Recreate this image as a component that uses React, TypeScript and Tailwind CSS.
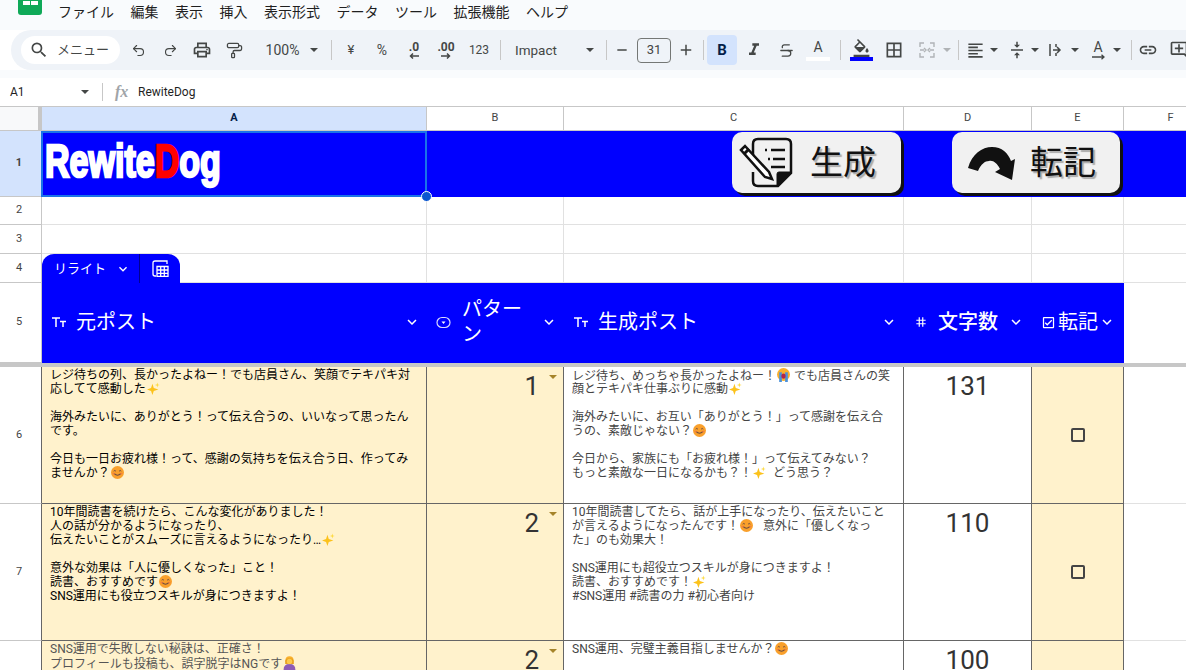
import React from "react";
import {
  MdOutlinePrint, MdSearch, MdRemove, MdAdd, MdFormatItalic,
  MdFormatColorFill, MdBorderAll, MdFormatAlignLeft, MdVerticalAlignCenter, MdLink, MdOutlineAddComment,
  MdExpandMore, MdOutlineCheckBox, MdTag,
} from "react-icons/md";
import { Undo2, Redo2, PaintRoller, Strikethrough } from "lucide-react";

const sans = "font-['Roboto','Noto_Sans_CJK_JP',sans-serif]";

const Caret = ({ c = "border-t-[#444746]" }: { c?: string }) => (
  <span className={`inline-block w-0 h-0 border-x-[4px] border-x-transparent border-t-[4px] ${c}`} />
);
const Sep = ({ w }: { w: string }) => (
  <div className={`${w} flex justify-center shrink-0`}><div className="w-px h-[20px] bg-[#c7c7c7]" /></div>
);
const Slot = ({ w, children, extra = "" }: { w: string; children?: React.ReactNode; extra?: string }) => (
  <div className={`${w} ${extra} h-[30px] flex items-center justify-center shrink-0 text-[#444746]`}>{children}</div>
);

const Sparkle = () => (
  <svg width="13" height="13" viewBox="0 0 24 24" className="inline-block align-[-2px] mx-px">
    <path d="M10 3 12.5 11 21 14 12.5 16.5 10 24 7.5 16.5 0 14 7.5 11Z" fill="#fcc21b" />
    <path d="M19 1 20 4.5 23.5 5.5 20 6.5 19 10 18 6.5 14.5 5.5 18 4.5Z" fill="#fdd835" />
  </svg>
);
const Smile = () => (
  <svg width="13" height="13" viewBox="0 0 24 24" className="inline-block align-[-2px] mx-px">
    <circle cx="12" cy="12" r="12" fill="#f9a02c" />
    <path d="M5 9.5q2-2.5 4 0M15 9.5q2-2.5 4 0" stroke="#6d4c41" strokeWidth="1.8" fill="none" />
    <path d="M6 14q6 6 12 0" stroke="#6d4c41" strokeWidth="2" fill="none" />
    <ellipse cx="5" cy="14" rx="2.5" ry="1.5" fill="#f06a4a" opacity=".6" />
    <ellipse cx="19" cy="14" rx="2.5" ry="1.5" fill="#f06a4a" opacity=".6" />
  </svg>
);
const Cry = () => (
  <svg width="13" height="14" viewBox="0 0 24 26" className="inline-block align-[-2px] mx-px">
    <circle cx="12" cy="12" r="12" fill="#f9b02c" />
    <rect x="4" y="8" width="5" height="18" fill="#4a90d9" />
    <rect x="15" y="8" width="5" height="18" fill="#4a90d9" />
    <ellipse cx="12" cy="15" rx="4" ry="5" fill="#b0274a" />
  </svg>
);
const Woman = () => (
  <svg width="13" height="14" viewBox="0 0 24 26" className="inline-block align-[-2px] mx-px">
    <path d="M1 26q0-11 11-11t11 11Z" fill="#8e5cb5" />
    <circle cx="12" cy="8" r="7.5" fill="#f9b02c" />
    <path d="M4 10q0-6 8-6t8 6v5H4Z" fill="#e8a020" />
    <circle cx="12" cy="10" r="5" fill="#fcc94d" />
  </svg>
);

const Line = ({ t }: { t: string }) => {
  const parts = t.split(/(✨|😊|😭|🙎)/);
  return (
    <div className="h-[14px] leading-[14px] whitespace-pre">
      {parts.map((p, i) =>
        p === "✨" ? <Sparkle key={i} /> : p === "😊" ? <Smile key={i} /> : p === "😭" ? <Cry key={i} /> : p === "🙎" ? <Woman key={i} /> : <span key={i}>{p}</span>
      )}
    </div>
  );
};

const Cw = { a: "w-[385px]", b: "w-[137px]", c: "w-[340px]", d: "w-[128px]", e: "w-[92px]" };

const RowHead = ({ n, active = false, dark = false }: { n: number; active?: boolean; dark?: boolean }) => (
  <div className={`w-[42px] shrink-0 border-r border-b pr-[3px] flex items-center justify-center text-[11px] text-[#444] ${active ? "bg-[#d3e3fd] font-bold border-[#c7c7c7] border-r-[#1a73e8]" : dark ? "bg-white border-[#c7c7c7] border-r-[#666]" : "bg-white border-[#c7c7c7]"}`}>{n}</div>
);

const blank = "border-r border-b border-[#e1e1e1]";
const EmptyRow = ({ n, h, children }: { n: number; h: string; children?: React.ReactNode }) => (
  <div className={`flex ${h} relative`}>
    <RowHead n={n} />
    <div className={`${Cw.a} ${blank}`} />
    <div className={`${Cw.b} ${blank}`} />
    <div className={`${Cw.c} ${blank}`} />
    <div className={`${Cw.d} ${blank}`} />
    <div className={`${Cw.e} ${blank}`} />
    <div className="flex-1 border-b border-[#e1e1e1]" />
    {children}
  </div>
);

const Tt = () => (
  <svg width="14" height="11" viewBox="0 0 14 11" className="shrink-0"><path d="M0 1h8M4 1v9M8 4.5h6M11 4.5V10" stroke="white" strokeWidth="1.5" fill="none" /></svg>
);
const Chev = () => <MdExpandMore size={18} className="text-white shrink-0" />;

const DataRow = ({ n, a, p, c, d, h, dim = false, check = true }: { n: number; a: string[]; p: number; c: string[]; d: number; h: string; dim?: boolean; check?: boolean }) => (
  <div className={`flex ${h}`}>
    <RowHead n={n} dark />
    <div className={`${Cw.a} bg-[#fff2cc] border-r border-b border-[#666] pl-[8px] pt-px text-[12px] overflow-hidden ${dim ? "text-[#555]" : "text-black"}`}>
      {a.map((t, i) => <Line key={i} t={t} />)}
    </div>
    <div className={`${Cw.b} relative bg-[#fff2cc] border-r border-b border-[#666] pr-[24px] text-right text-[26px] leading-[38px] text-[#333] font-['Roboto',sans-serif]`}>
      {p}
      <span className="absolute right-[6px] top-[8px] flex"><Caret c="border-t-[#a5842a]" /></span>
    </div>
    <div className={`${Cw.c} bg-white border-r border-b border-[#666] pl-[8px] pt-px text-[12px] text-[#444] overflow-hidden`}>
      {c.map((t, i) => <Line key={i} t={t} />)}
    </div>
    <div className={`${Cw.d} bg-white border-r border-b border-[#666] text-center text-[26px] leading-[38px] text-[#333] font-['Roboto',sans-serif]`}>{d}</div>
    <div className={`${Cw.e} bg-[#fff2cc] border-r border-b border-[#666] flex items-center justify-center`}>
      {check && <div className="w-[14px] h-[14px] border-2 border-[#444] rounded-[2px]" />}
    </div>
    <div className="flex-1 bg-white border-b border-[#e1e1e1]" />
  </div>
);

export default function App() {
  return (
    <div className={`w-[1186px] h-[670px] overflow-hidden bg-white ${sans}`}>
      {/* menu */}
      <div className="h-[30px] bg-[#f9fbfd] flex items-start">
        <div className="ml-[18px] w-[24px] h-[15px] bg-[#0fa958] rounded-b-[3px] flex justify-center items-start pt-px gap-px shrink-0">
          <div className="w-[7px] h-[4px] bg-white" />
          <div className="w-[7px] h-[4px] bg-white" />
        </div>
        <div className="ml-[16px] flex gap-[16.5px] text-[14px] leading-[24px] text-[#1f1f1f]">
          {["ファイル", "編集", "表示", "挿入", "表示形式", "データ", "ツール", "拡張機能", "ヘルプ"].map((m) => <span key={m}>{m}</span>)}
        </div>
      </div>
      {/* toolbar */}
      <div className="h-[40px] ml-[11px] pl-[10px] bg-[#eff3f8] rounded-l-[20px] flex items-center overflow-hidden">
        <div className="w-[99px] h-[28px] shrink-0 bg-white rounded-full flex items-center pl-[8px] gap-[8px] text-[13px] text-[#444746]">
          <MdSearch size={20} /><span>メニュー</span>
        </div>
        <div className="w-[2px] shrink-0" />
        <Slot w="w-[32px]"><Undo2 size={15} strokeWidth={1.8} /></Slot>
        <Slot w="w-[32px]"><Redo2 size={15} strokeWidth={1.8} /></Slot>
        <Slot w="w-[32px]"><MdOutlinePrint size={20} /></Slot>
        <Slot w="w-[32px]"><PaintRoller size={17} strokeWidth={1.8} /></Slot>
        <Slot w="w-[76px]" extra="gap-[11px] text-[14px] pl-[8px]"><span>100%</span><Caret /></Slot>
        <Sep w="w-[10px]" />
        <Slot w="w-[30px]" extra="text-[13px]">¥</Slot>
        <Slot w="w-[32px]" extra="text-[14px]">%</Slot>
        <Slot w="w-[32px]"><span className="flex flex-col items-center leading-[11px] text-[12px] font-bold"><span>.0</span><svg width="10" height="6" viewBox="0 0 10 6"><path d="M10 3H2M4 .5 1.5 3 4 5.5" stroke="#444746" strokeWidth="1.5" fill="none" /></svg></span></Slot>
        <Slot w="w-[32px]"><span className="flex flex-col items-center leading-[11px] text-[12px] font-bold"><span>.00</span><svg width="10" height="6" viewBox="0 0 10 6"><path d="M0 3h8M6 .5 8.5 3 6 5.5" stroke="#444746" strokeWidth="1.5" fill="none" /></svg></span></Slot>
        <Slot w="w-[34px]" extra="text-[12px]">123</Slot>
        <Sep w="w-[8px]" />
        <Slot w="w-[96px]" extra="justify-start! pl-[11px] gap-[25px] text-[13.5px]"><span className="w-[46px]">Impact</span><Caret /></Slot>
        <Sep w="w-[12px]" />
        <Slot w="w-[20px]"><MdRemove size={16} /></Slot>
        <div className="ml-[5px] w-[34px] h-[25px] shrink-0 border border-[#747775] rounded-[4px] flex items-center justify-center text-[13px] text-[#444746]">31</div>
        <Slot w="w-[30px]"><MdAdd size={18} /></Slot>
        <Sep w="w-[4px]" />
        <div className="ml-[2px] w-[30px] h-[30px] shrink-0 bg-[#d3e3fd] rounded-[4px] flex items-center justify-center text-[15px] font-bold text-[#041e49]">B</div>
        <Slot w="w-[33px]"><MdFormatItalic size={20} /></Slot>
        <Slot w="w-[32px]"><Strikethrough size={17} strokeWidth={1.8} /></Slot>
        <Slot w="w-[32px]"><span className="flex flex-col items-center w-[24px] text-[14px] leading-[15px]"><span>A</span><span className="w-[24px] h-[4px] bg-white mt-[2px]" /></span></Slot>
        <Sep w="w-[12px]" />
        <Slot w="w-[30px]"><span className="flex flex-col items-center"><MdFormatColorFill size={19} /><span className="w-[23px] h-[4px] bg-[#0000ff] -mt-px" /></span></Slot>
        <div className="w-[2px] shrink-0" />
        <Slot w="w-[32px]"><MdBorderAll size={20} /></Slot>
        <div className="w-px shrink-0" />
        <Slot w="w-[32px]">
          <svg width="16" height="16" viewBox="0 0 16 16" fill="none" stroke="#b0b3b6" strokeWidth="1.4"><path d="M1 5V1h4M11 1h4v4M1 11v4h4M11 15h4v-4M1 8h4M5 6l2 2-2 2M15 8h-4M11 6 9 8l2 2" /></svg>
        </Slot>
        <Slot w="w-[8px]"><Caret c="border-t-[#b0b3b6]" /></Slot>
        <Sep w="w-[14px]" />
        <Slot w="w-[20px]"><MdFormatAlignLeft size={19} /></Slot>
        <Slot w="w-[18px]"><Caret /></Slot>
        <div className="w-[4px] shrink-0" />
        <Slot w="w-[20px]"><MdVerticalAlignCenter size={18} /></Slot>
        <Slot w="w-[16px]"><Caret /></Slot>
        <Slot w="w-[26px]">
          <svg width="16" height="16" viewBox="0 0 16 16" fill="none" stroke="#444746" strokeWidth="1.5"><path d="M2 2v12M8 2v3M8 11v3M5 8h7M9 5l3 3-3 3" /></svg>
        </Slot>
        <Slot w="w-[12px]"><Caret /></Slot>
        <Slot w="w-[34px]">
          <span className="flex flex-col items-center text-[14px] leading-[13px]"><span>A</span>
            <svg width="15" height="6" viewBox="0 0 15 6" fill="none" stroke="#444746" strokeWidth="1.3"><path d="M1 3h12M10.5.7 13 3l-2.5 2.3" /></svg>
          </span>
        </Slot>
        <Slot w="w-[4px]"><Caret /></Slot>
        <Sep w="w-[24px]" />
        <Slot w="w-[20px]" extra="-ml-[5px]"><MdLink size={20} /></Slot>
        <div className="w-[11px] shrink-0" />
        <Slot w="w-[20px]"><MdOutlineAddComment size={20} /></Slot>
      </div>
      <div className="h-[8px] bg-[#f9fbfd]" />
      {/* formula bar */}
      <div className="h-[29px] border-b border-[#c7c7c7] flex items-center text-[12px] text-[#1f1f1f]">
        <span className="ml-[10px] w-[71px]">A1</span>
        <Caret />
        <div className="ml-[13px] w-px h-[18px] bg-[#c7c7c7]" />
        <span className="ml-[12px] w-[23px] text-[16px] font-bold italic text-[#a0a4a8] font-['Liberation_Serif',serif]">fx</span>
        <span>RewiteDog</span>
      </div>
      {/* column headers */}
      <div className="flex h-[24px] text-[11px] text-[#444]">
        <div className="w-[42px] shrink-0 flex border-b border-[#c7c7c7]">
          <div className="w-[38px] bg-[#f8f9fa]" />
          <div className="w-[4px] bg-[#c7c7c7]" />
        </div>
        <div className={`${Cw.a} bg-[#d3e3fd] font-bold text-[#041e49] flex items-center justify-center border-r border-b border-[#c7c7c7]`}>A</div>
        {(["B", "C", "D", "E"] as const).map((l) => (
          <div key={l} className={`${l === "B" ? Cw.b : l === "C" ? Cw.c : l === "D" ? Cw.d : Cw.e} flex items-center justify-center border-r border-b border-[#c7c7c7]`}>{l}</div>
        ))}
        <div className="flex-1 pl-[31px] flex items-center justify-center border-b border-[#c7c7c7]">F</div>
      </div>
      {/* row 1 */}
      <div className="flex h-[66px] relative">
        <RowHead n={1} active />
        <div className="flex-1 bg-[#0000ff]" />
        <div className="absolute left-[41px] top-0 w-[386px] h-[66px] border-2 border-[#1a73e8] overflow-hidden">
          <div className="absolute left-[2px] top-[3px] text-[46px] leading-[50px] font-bold whitespace-nowrap origin-left [transform:scaleX(0.74)] text-white [-webkit-text-stroke:2.5px_white] font-['Liberation_Sans',sans-serif]">
            Rewite<span className="text-[#ff0000] [-webkit-text-stroke:2.5px_#ff0000]">D</span>og
          </div>
        </div>
        <div className="absolute left-[421px] top-[60px] w-[11px] h-[11px] rounded-full bg-[#0b57d0] border border-white z-10" />
        <div className="absolute left-[732px] top-[1px] w-[169px] h-[61px] bg-[#f1f1f1] rounded-[10px] shadow-[3px_3px_0_#111] flex items-center pl-[7px] gap-[15px]">
          <svg width="56" height="54" viewBox="0 0 56 54" fill="none" stroke="#111">
            <path d="M14 21V8q0-5 5-5h28q5 0 5 5v29L39 50H19q-5 0-5-5V36" strokeWidth="2.5" />
            <path d="M38 50V38q0-2 2-2h12Z" fill="#111" strokeWidth="1" />
            <path d="M26 14h2M32 14h14M29 23h2M34 23h12M32 31h14" strokeWidth="2.5" />
            <path d="M2 14 6 10 30 36 33 43 26 41Z" fill="white" strokeWidth="2.5" />
            <path d="M5 18 10 13" strokeWidth="3" />
          </svg>
          <span className="text-[33px] leading-none text-[#111] [text-shadow:2px_2px_1px_#aaa]">生成</span>
        </div>
        <div className="absolute left-[952px] top-[1px] w-[168px] h-[61px] bg-[#f1f1f1] rounded-[10px] shadow-[3px_3px_0_#111] flex items-center pl-[16px] gap-[14px]">
          <svg width="48" height="34" viewBox="0 0 48 34" fill="#111">
            <path d="M0 22C4 8 14 1 24 1s16 6 19 14l4-2-3 21-17-8 5-3C29 17 25 14 21 15c-4 0-8 3-11 10Z" />
          </svg>
          <span className="text-[33px] leading-none text-[#111] [text-shadow:2px_2px_1px_#aaa]">転記</span>
        </div>
      </div>
      <EmptyRow n={2} h="h-[28px]" />
      <EmptyRow n={3} h="h-[29px]" />
      <EmptyRow n={4} h="h-[29px]">
        <div className="absolute left-[42px] top-0 w-[138px] h-[29px] bg-[#0000ff] rounded-t-[12px] flex items-center text-white text-[13px]">
          <span className="ml-[12px] w-[61px]">リライト</span>
          <MdExpandMore size={16} />
          <div className="ml-[8px] w-px h-full bg-[#000090]" />
          <svg width="17" height="17" viewBox="0 0 17 17" fill="none" stroke="white" strokeWidth="1.3" className="ml-[12px]">
            <path d="M15 4V1H3Q1 1 1 3v11q0 2 2 2h1M5 6.5h11v10H5ZM5 10h11M5 13.3h11M8.7 6.5v10M12.3 6.5v10" />
          </svg>
        </div>
      </EmptyRow>
      {/* row 5 */}
      <div className="flex h-[80px]">
        <RowHead n={5} />
        <div className="w-[1082px] shrink-0 flex bg-[#0000ff] text-white text-[20px] pb-[2px]">
          <div className={`${Cw.a} flex items-center pl-[10px] pr-[6px]`}>
            <Tt /><span className="ml-[10px] flex-1">元ポスト</span><Chev />
          </div>
          <div className={`${Cw.b} flex items-center pl-[9px] pr-[6px]`}>
            <svg width="15" height="15" viewBox="0 0 15 15" fill="none" stroke="white" strokeOpacity=".85" strokeWidth="1.2" className="shrink-0"><rect x="1" y="2.5" width="13" height="10" rx="5" /><path d="M5.5 6.5h4L7.5 9Z" fill="white" stroke="none" /></svg>
            <span className="ml-[11px] flex-1 leading-[25px]">パター<br />ン</span><Chev />
          </div>
          <div className={`${Cw.c} flex items-center pl-[10px] pr-[6px]`}>
            <Tt /><span className="ml-[10px] flex-1">生成ポスト</span><Chev />
          </div>
          <div className={`${Cw.d} flex items-center pl-[10px] pr-[7px]`}>
            <MdTag size={14} className="shrink-0" /><span className="ml-[10px] font-medium">文字数</span><span className="flex-1" /><Chev />
          </div>
          <div className={`${Cw.e} flex items-center pl-[9px]`}>
            <MdOutlineCheckBox size={15} className="shrink-0" /><span className="ml-[2px]">転記</span><Chev />
          </div>
        </div>
        <div className="flex-1 bg-white" />
      </div>
      <div className="h-[4px] bg-[#c7c7c7]" />
      <DataRow n={6} h="h-[137px]" p={1} d={131}
        a={["レジ待ちの列、長かったよねー！でも店員さん、笑顔でテキパキ対", "応してて感動した✨", "", "海外みたいに、ありがとう！って伝え合うの、いいなって思ったん", "です。", "", "今日も一日お疲れ様！って、感謝の気持ちを伝え合う日、作ってみ", "ませんか？😊"]}
        c={["レジ待ち、めっちゃ長かったよねー！😭 でも店員さんの笑", "顔とテキパキ仕事ぶりに感動✨", "", "海外みたいに、お互い「ありがとう！」って感謝を伝え合", "うの、素敵じゃない？😊", "", "今日から、家族にも「お疲れ様！」って伝えてみない？", "もっと素敵な一日になるかも？！✨  どう思う？"]}
      />
      <DataRow n={7} h="h-[137px]" p={2} d={110}
        a={["10年間読書を続けたら、こんな変化がありました！", "人の話が分かるようになったり、", "伝えたいことがスムーズに言えるようになったり…✨", "", "意外な効果は「人に優しくなった」こと！", "読書、おすすめです😊", "SNS運用にも役立つスキルが身につきますよ！"]}
        c={["10年間読書してたら、話が上手になったり、伝えたいこと", "が言えるようになったんです！😊   意外に「優しくなっ", "た」のも効果大！", "", "SNS運用にも超役立つスキルが身につきますよ！", "読書、おすすめです！✨", "#SNS運用 #読書の力 #初心者向け"]}
      />
      <DataRow n={8} h="h-[137px]" p={2} d={100} dim check={false}
        a={["SNS運用で失敗しない秘訣は、正確さ！", "プロフィールも投稿も、誤字脱字はNGです🙎"]}
        c={["SNS運用、完璧主義目指しませんか？😊"]}
      />
    </div>
  );
}
